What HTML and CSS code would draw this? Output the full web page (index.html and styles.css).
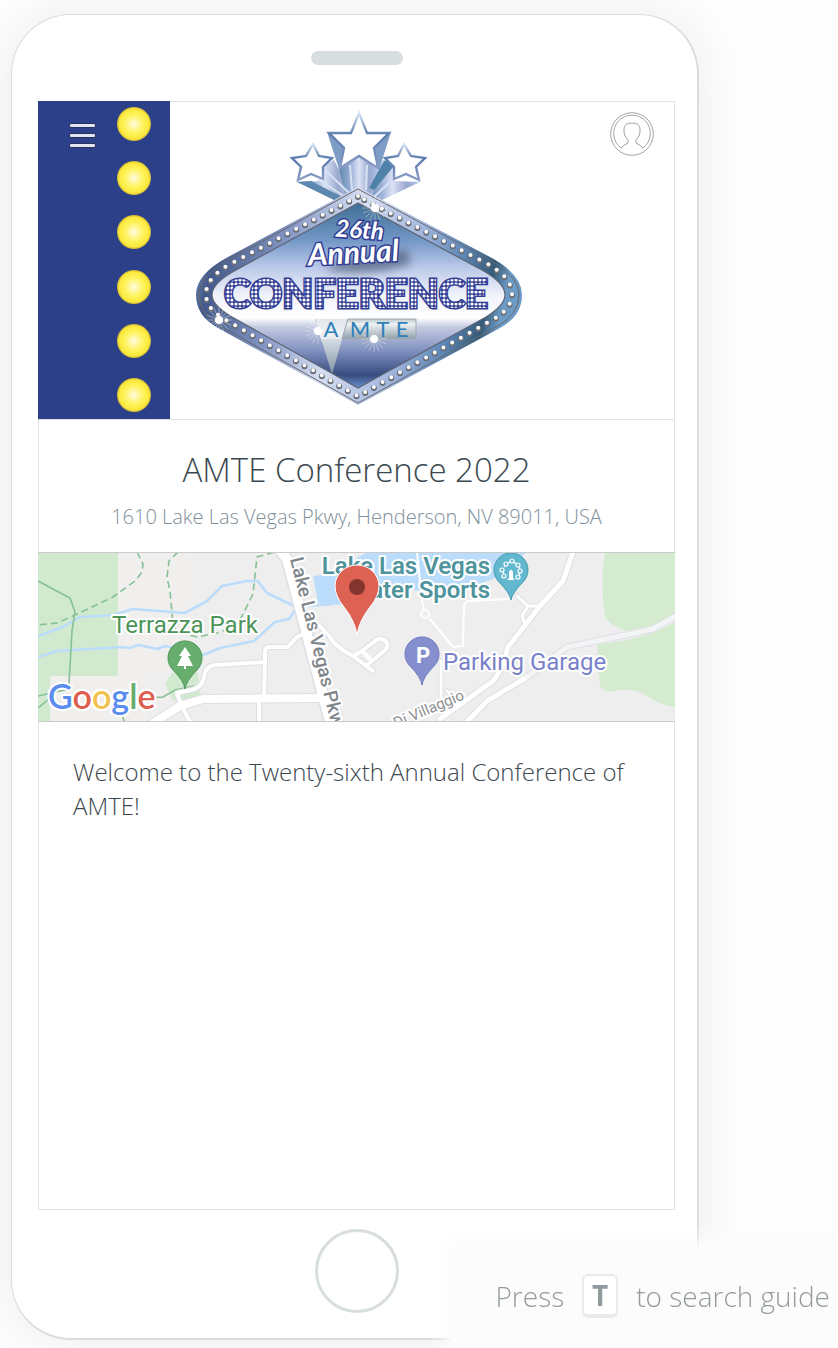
FILE: index.html
```
<!DOCTYPE html>
<html lang="en">
<head>
  <meta charset="UTF-8">
  <meta name="viewport" content="width=device-width, initial-scale=1.0">
  <title>AMTE Conference 2022</title>
  <link rel="stylesheet" href="styles.css">
</head>
<body>

  <main class="phone">
    <div class="speaker"></div>

    <div class="screen">
      <header class="banner">
        <svg class="banner-art" viewBox="38 101 637 318" xmlns="http://www.w3.org/2000/svg" role="img" aria-label="26th Annual Conference AMTE">
          <defs>
            <radialGradient id="bulb">
              <stop offset="0" stop-color="#fffce0"/>
              <stop offset="0.55" stop-color="#fff35c"/>
              <stop offset="0.88" stop-color="#fbe83c"/>
              <stop offset="1" stop-color="#c9b23a"/>
            </radialGradient>
            <linearGradient id="frame" x1="0" y1="0" x2="1" y2="0.15">
              <stop offset="0" stop-color="#8fb5df"/>
              <stop offset="0.1" stop-color="#42588a"/>
              <stop offset="0.3" stop-color="#8093c4"/>
              <stop offset="0.5" stop-color="#d5def2"/>
              <stop offset="0.7" stop-color="#a6b9e0"/>
              <stop offset="0.85" stop-color="#5b86b6"/>
              <stop offset="0.95" stop-color="#345b78"/>
              <stop offset="1" stop-color="#6c9bc8"/>
            </linearGradient>
            <linearGradient id="panel" x1="0" y1="0" x2="0" y2="1">
              <stop offset="0" stop-color="#3f6f94"/>
              <stop offset="0.2" stop-color="#7297c6"/>
              <stop offset="0.34" stop-color="#b7c6e8"/>
              <stop offset="0.5" stop-color="#f1f3fb"/>
              <stop offset="0.62" stop-color="#ffffff"/>
              <stop offset="0.67" stop-color="#c5cbe2"/>
              <stop offset="0.8" stop-color="#7f90bf"/>
              <stop offset="0.93" stop-color="#374c80"/>
              <stop offset="1" stop-color="#6a91cc"/>
            </linearGradient>
            <linearGradient id="ray">
              <stop offset="0" stop-color="#5c86ac"/>
              <stop offset="0.3" stop-color="#9db1d7"/>
              <stop offset="0.5" stop-color="#dae2f4"/>
              <stop offset="0.75" stop-color="#9aa8cf"/>
              <stop offset="1" stop-color="#b3c8e8"/>
            </linearGradient>
            <linearGradient id="starEdge" x1="0" y1="0" x2="0" y2="1">
              <stop offset="0" stop-color="#dbe7f8"/>
              <stop offset="0.4" stop-color="#5a7bad"/>
              <stop offset="1" stop-color="#8b9bc6"/>
            </linearGradient>
            <linearGradient id="plate" x1="0" y1="0" x2="0" y2="1">
              <stop offset="0" stop-color="#bac7cb"/>
              <stop offset="0.25" stop-color="#eef2f4"/>
              <stop offset="1" stop-color="#8d9fa9"/>
            </linearGradient>
            <pattern id="marquee" x="222" y="278" width="4" height="4" patternUnits="userSpaceOnUse">
              <rect width="4" height="4" fill="#313c93"/>
              <circle cx="2" cy="2" r="1.6" fill="#fff"/>
            </pattern>
            <filter id="soft" x="-30%" y="-30%" width="160%" height="160%">
              <feGaussianBlur stdDeviation="4"/>
            </filter>
            <g id="sparkle" stroke="#fff" stroke-width="0.6" stroke-opacity="0.6">
              <path d="M-13 0H13M0 -13V13M-9 -9L9 9M-9 9L9 -9M-12 -5L12 5M-12 5L12 -5M-5 -12L5 12M5 -12L-5 12"/>
              <circle r="4" fill="#fff" stroke="none"/>
            </g>
          </defs>

          <rect x="38" y="101" width="132" height="319" fill="#2b4088"/>
          <g fill="url(#bulb)">
            <circle cx="134" cy="124" r="17"/>
            <circle cx="134" cy="178" r="17"/>
            <circle cx="134" cy="232" r="17"/>
            <circle cx="134" cy="287" r="17"/>
            <circle cx="134" cy="341" r="17"/>
            <circle cx="134" cy="395" r="17"/>
          </g>

          <!-- Star trails -->
          <g fill="url(#ray)">
            <path d="M297 182L323 181L323 166L334 160L352 196L338 200Z"/>
            <path d="M420 182L394 181L394 166L383 160L365 196L380 201Z"/>
            <path d="M339 169L359 154L379 170L372 198H346Z"/>
          </g>
          <path d="M327 132L345 147L339 169ZM391 132L373 147L379 170Z" fill="#7d9dc6"/>
          <path d="M297 182L311 181L346 199L336 201Z" fill="#5c88b0"/>
          <path d="M394 166L374 190L369 188L379 170L385 160Z" fill="#4f82a8"/>
          <path d="M323 168L350 194M318 179L345 197M394 178L374 197M350 165L352 190M367 165L366 190" stroke="#d7e2f5" stroke-width="2" fill="none"/>

          <!-- Stars -->
          <g fill="#fff" stroke="url(#starEdge)" stroke-width="2.4">
            <path d="M359 113L367 133L389 133L374 148L378 168L359 156L340 168L344 148L329 133L351 133Z"/>
            <path d="M313 144L319 156L332 158L323 167L323 179L311 174L298 180L301 167L292 158L306 156Z"/>
            <path d="M404 144L398 156L385 158L394 167L394 179L406 174L419 180L416 167L425 158L411 156Z"/>
          </g>

          <!-- Sign -->
          <path d="M358 187L228 257Q196 274 196 295Q196 316 218 328L358 405L500 328Q522 316 522 295Q522 274 490 257Z" fill="url(#frame)"/>
          <path d="M358 189L230 259Q199 276 199 295Q199 314 220 326L358 403L498 326Q519 314 519 295Q519 276 488 259Z" fill="none" stroke="#6a6868" stroke-width="1"/>
          <path d="M358 203L236 270Q212 283 212 295Q212 305 232 317L358 388L486 317Q505 305 505 295Q505 283 482 270Z" fill="url(#panel)" stroke="#5d6370" stroke-width="1.2"/>
          <path d="M358 197L232 264Q206 278 206 295Q206 310 226 321L358 397L492 321Q512 310 512 295Q512 278 486 264Z" fill="none" stroke="#6b6e76" stroke-width="6" stroke-linecap="round" stroke-dasharray="0 10"/>
          <path d="M358 196L232 263Q206 277 206 294Q206 309 226 320L358 396L492 320Q512 309 512 294Q512 277 486 263Z" fill="none" stroke="#fff" stroke-width="4" stroke-linecap="round" stroke-dasharray="0 10"/>

          <path d="M328 266Q370 250 408 250L410 264Q370 278 326 270Z" fill="#3f4d68" opacity="0.6" filter="url(#soft)"/>
          <g class="sign-script">
            <text x="335" y="238" transform="rotate(4 357 235)">26th</text>
            <text class="script-big" x="308" y="263" transform="rotate(-3 357 255)">Annual</text>
          </g>

          <text class="sign-name" x="356" y="308" text-anchor="middle">CONFERENCE</text>

          <path d="M315 319H348L332 374Z" fill="url(#plate)" opacity="0.85"/>
          <path d="M348 319H416V339H342Z" fill="url(#plate)" stroke="#a1aab2"/>
          <path d="M316 319H347L341 339H321Z" fill="#eef1f5" opacity="0.7"/>
          <use href="#sparkle" x="219" y="320"/>
          <use href="#sparkle" x="318" y="331"/>
          <use href="#sparkle" x="374" y="339"/>
          <use href="#sparkle" x="375" y="208"/>
          <g class="sign-amte" text-anchor="middle">
            <text x="331" y="337">A</text>
            <text x="360" y="337">M</text>
            <text x="383" y="337">T</text>
            <text x="402" y="337">E</text>
          </g>
        </svg>

        <button class="menu-button" type="button" aria-label="Menu">
          <span></span><span></span><span></span>
        </button>
        <button class="profile-button" type="button" aria-label="Profile">
          <svg viewBox="0 0 44 44" fill="none" stroke="#a3a3a3" stroke-width="1">
            <circle cx="22" cy="22" r="21.3"/>
            <path d="M11 36A18.3 18.3 0 1 1 33 36Q30 33 26 31V28Q30 24 30 20V17Q30 11 22 11T14 17V20Q14 24 18 28V31Q14 33 11 36Z"/>
          </svg>
        </button>
      </header>

      <section class="intro">
        <h1>AMTE Conference 2022</h1>
        <p>1610 Lake Las Vegas Pkwy, Henderson, NV 89011, USA</p>
      </section>

      <a class="map" href="#map" aria-label="Open map">
        <svg viewBox="38 554 637 168" xmlns="http://www.w3.org/2000/svg">
          <rect x="38" y="553" width="638" height="170" fill="#eeeeee"/>
          <path d="M38 553H194V650L165 677H150V723H38Z" fill="#f1efed"/>
          <path d="M38 553H118V677H50V723H38Z" fill="#d1e9cf"/>
          <path d="M165 684L172 674H198L200 698L173 702Z" fill="#d1e9cf"/>
          <path d="M605 553Q600 580 605 618Q612 628 627 632Q660 627 676 614V553Z" fill="#d4ebd0"/>
          <path d="M597 645L600 688Q606 694 614 692Q633 688 646 696Q660 707 676 708V622Q650 640 597 645Z" fill="#d4ebd0"/>
          <path d="M313 577L340 574Q354 557 370 553H527L497 577Q486 588 420 592L375 585L355 604L332 606L318 604Z" fill="#bbddfb"/>

          <!-- Streams -->
          <g fill="none" stroke="#bbddfb" stroke-width="2.6" stroke-linejoin="round">
            <path d="M38 637L63 628L80 618L113 616L133 610L185 614L207 602L222 587L247 582L258 582L267 594L296 608L332 605"/>
            <path d="M38 658L57 652L122 648L130 649L138 646L158 650L165 647L203 656L220 649L254 642L275 623L289 620L296 610"/>
          </g>

          <!-- Trails -->
          <g fill="none" stroke="#86c195" stroke-width="1.6">
            <path d="M38 582L70 599L75 613L72 632L69 685M38 697L69 690M38 709L55 695M150 699L163 698L175 691L194 687M118 696H150M122 712L124 723"/>
            <path stroke-dasharray="7 4" d="M137 553L143 565L142 573L135 582L113 598L75 616L57 624L38 626"/>
            <path stroke-dasharray="7 4" d="M178 553L169 562L167 578L170 592L173 625L177 633L197 638L217 634L237 627L253 595L257 558L275 553"/>
          </g>

          <!-- Roads: grey casing with white on top -->
          <g fill="none" stroke-linejoin="round" stroke-linecap="round">
            <g stroke="#dedfe4">
              <path stroke-width="13" d="M275 545L287 560L332 730"/>
              <path stroke-width="10" d="M150 726L180 707L203 700L323 699"/>
              <path stroke-width="6" d="M182 708L177 694L195 690Q203 687 205 674Q207 667 215 666L265 663V653Q265 648 270 648H288L297 638L320 627L330 638Q335 648 353 657L362 652L375 642Q379 638 384 641Q391 646 384 652L366 667M353 657L373 672M265 663L264 698M259 702V726M182 708L192 726"/>
              <path stroke-width="7" d="M573 553L563 582L540 607L508 648Q503 670 493 682L440 720M676 617L653 630L597 642L567 648L527 678L487 702L464 726"/>
              <path stroke-width="5" d="M517 597L528 607L540 607M528 607L522 617L525 625M441 662V707M447 692L455 700"/>
            </g>
            <g stroke="#fff">
              <path stroke-width="10" d="M275 545L287 560L332 730"/>
              <path stroke-width="8" d="M150 726L180 707L203 700L323 699"/>
              <path stroke-width="4" d="M182 708L177 694L195 690Q203 687 205 674Q207 667 215 666L265 663V653Q265 648 270 648H288L297 638L320 627L330 638Q335 648 353 657L362 652L375 642Q379 638 384 641Q391 646 384 652L366 667M353 657L373 672M362 652L370 660M265 663L264 698M259 702V726M182 708L192 726"/>
              <path stroke-width="5" d="M573 553L563 582L540 607L508 648Q503 670 493 682L440 720M527 678L487 702L464 726"/>
              <path stroke="#f3f4f6" stroke-width="5" d="M676 617L653 630L597 642L567 648L527 678"/>
              <path stroke-width="3" d="M517 597L528 607L540 607M528 607L522 617L525 625M441 662V707M447 692L455 700"/>
              <path stroke-width="2" d="M417 553L422 602L424 610M430 620L453 648L463 647L464 605L468 602L512 600"/>
              <circle cx="425" cy="615" r="4" stroke-width="2"/>
            </g>
          </g>

          <g class="map-labels">
            <text class="label-road" transform="translate(290 560) rotate(76)">Lake Las Vegas Pkwy</text>
            <text class="label-street" transform="translate(373 739) rotate(-23)">Via Di Villaggio</text>
            <text class="label-park" x="112" y="634">Terrazza Park</text>
            <text class="label-parking" x="443" y="671">Parking Garage</text>
            <text class="label-water" x="490" y="575" text-anchor="end">Lake Las Vegas</text>
            <text class="label-water" x="490" y="599" text-anchor="end">Water Sports</text>
            <text class="label-google" x="48" y="710"><tspan fill="#5b8def">G</tspan><tspan fill="#dd5f50">o</tspan><tspan fill="#f2c24f">o</tspan><tspan fill="#5b8def">g</tspan><tspan fill="#67ad6c">l</tspan><tspan fill="#dd5f50">e</tspan></text>
          </g>

          <!-- Pins -->
          <path d="M185 690Q184 682 173 671A17 17 0 1 1 197 671Q186 682 185 690Z" fill="#67ae6e" stroke="#4b9556"/>
          <path d="M185 648L191 657H188L193 667H186V670H184V667H177L182 657H179Z" fill="#fff"/>
          <path d="M422 686Q421 678 410 667A17 17 0 1 1 434 667Q423 678 422 686Z" fill="#868fce" stroke="#6e78bd"/>
          <text class="pin-letter" x="423" y="664" text-anchor="middle">P</text>
          <path d="M511 601Q510 594 499 583A17 17 0 1 1 523 583Q512 594 511 601Z" fill="#62b8ce" stroke="#459bad"/>
          <path d="M507 581L509 579V574Q509 571 511 571T513 574V579L515 581Z" fill="#fff"/>
          <g fill="none" stroke="#fff" stroke-width="1.2">
            <path d="M504 575L503 573M504 568L505 567M508 564L510 563M514 563L516 565M519 568L520 570M520 574L519 576"/>
            <circle cx="504" cy="577" r="2"/>
            <circle cx="502" cy="571" r="2"/>
            <circle cx="506" cy="565" r="2"/>
            <circle cx="512" cy="562" r="2"/>
            <circle cx="518" cy="566" r="2"/>
            <circle cx="520" cy="572" r="2"/>
            <circle cx="518" cy="578" r="2"/>
          </g>
          <path d="M357 636Q355 622 344 608Q335 597 335 587A22 21 0 0 1 379 587Q379 597 370 608Q359 622 357 636Z" fill="#de6253" stroke="#fff"/>
          <circle cx="357" cy="588" r="8" fill="#83342e"/>
        </svg>
      </a>

      <p class="welcome">Welcome to the Twenty-sixth Annual Conference of AMTE!</p>
    </div>

    <button class="home-button" type="button" aria-label="Home"></button>
  </main>

  <aside class="search-hint">
    <span>Press</span>
    <kbd>T</kbd>
    <span>to search guide</span>
  </aside>

</body>
</html>
```
FILE: styles.css
```
* {
  box-sizing: border-box;
}
body {
  margin: 0;
  min-height: 100vh;
  padding: 14px 139px 8px 11px;
  display: flex;
  background-color: #fdfdfd;
  color: #3c4850;
  font-family: "Open Sans", "Noto Sans", sans-serif;
}
button {
  padding: 0;
  border: 0;
  background: none;
  cursor: pointer;
}
.phone {
  flex: 1;
  min-width: 0;
  display: flex;
  flex-direction: column;
  align-items: center;
  padding: 36px 22px 25px 26px;
  background-color: #fff;
  border: 2px solid #d7dde0;
  border-width: 1px 2px 2px 1px;
  border-radius: 60px;
  box-shadow: 0 0 50px rgba(0, 0, 0, 0.07);
}
.speaker {
  width: 92px;
  height: 14px;
  border-radius: 7px;
  background-color: #d8dee0;
}
.screen {
  flex: 1;
  width: 100%;
  margin: 36px 0 19px;
  background-color: #fff;
  border: 1px solid #e0e3e4;
}

/* Banner and map cover the side borders of the screen */
.banner,
.map {
  margin: 0 -1px;
}
.banner {
  position: relative;
  margin-top: -1px;
  border-bottom: 1px solid #e0e3e4;
}
.banner::after {
  content: "";
  position: absolute;
  inset: 0 0 0 132px;
  border-top: 1px solid #e0e3e4;
  border-right: 1px solid #e0e3e4;
  pointer-events: none;
}
.banner-art {
  display: block;
  width: 100%;
  height: auto;
}
.menu-button {
  position: absolute;
  top: 22px;
  left: 31px;
  width: 27px;
  height: 25px;
  display: flex;
  flex-direction: column;
  justify-content: space-between;
}
.menu-button span {
  width: 27px;
  height: 5px;
  border: 1px solid #26325f;
  border-radius: 2px;
  background-color: #e3e6f2;
}
.profile-button {
  position: absolute;
  top: 11px;
  right: 21px;
  width: 44px;
  height: 44px;
}
.profile-button svg {
  display: block;
}
.sign-script text {
  font: italic 700 24px Lato, sans-serif;
  fill: #fff;
  stroke: #313c93;
  stroke-width: 3px;
  paint-order: stroke;
}
.sign-script .script-big {
  font-size: 30px;
}
.sign-name {
  font: 900 40px Lato, sans-serif;
  fill: url(#marquee);
  stroke: #313c93;
  stroke-width: 3px;
  paint-order: stroke;
}
.sign-amte text {
  font: 22px Lato, sans-serif;
  fill: #2f7fb8;
}

/* Title and address */
.intro {
  padding: 26px 16px 20px;
  text-align: center;
}
.intro h1 {
  margin: 0;
  font-size: 33px;
  line-height: 48px;
  font-weight: 300;
}
.intro p {
  margin: 8px 0 0;
  font-size: 20px;
  line-height: 30px;
  font-weight: 300;
  color: #80909a;
}

/* Map */
.map {
  display: block;
  border-top: 1px solid #c9cbcb;
  border-bottom: 1px solid #c9cbcb;
}
.map svg {
  display: block;
  width: 100%;
  height: auto;
}
.map-labels text {
  font-family: Roboto, sans-serif;
  font-size: 24px;
  stroke: #fff;
  stroke-width: 4px;
  stroke-linejoin: round;
  paint-order: stroke;
}
.map-labels .label-park {
  fill: #4c9458;
}
.map-labels .label-parking {
  fill: #7881c9;
}
.map-labels .label-water {
  font-weight: 600;
  fill: #4f949d;
}
.map-labels .label-road {
  font-size: 19px;
  font-weight: 500;
  fill: #7f868b;
}
.map-labels .label-street {
  font-size: 15px;
  fill: #8b8e91;
}
.map-labels .label-google {
  font-family: Lato, sans-serif;
  font-size: 34px;
  font-weight: 600;
}
.map .pin-letter {
  font: 700 22px Roboto, sans-serif;
  fill: #fff;
}

.welcome {
  margin: 0;
  padding: 33px 34px;
  font-size: 24px;
  line-height: 34px;
  font-weight: 300;
}
.home-button {
  width: 84px;
  height: 84px;
  border: 3px solid #d8dee0;
  border-radius: 50%;
}

/* Keyboard hint */
.search-hint {
  position: fixed;
  right: 0;
  bottom: 0;
  display: flex;
  align-items: center;
  gap: 18px;
  padding: 28px 8px 30px 44px;
  background-color: #fcfcfc;
  box-shadow: 0 0 16px 8px #fcfcfc;
  color: #949b9f;
  font-size: 28px;
  line-height: 44px;
  font-weight: 300;
}
.search-hint kbd {
  width: 36px;
  height: 44px;
  border: 2px solid #e8eaeb;
  border-bottom-width: 4px;
  border-radius: 6px;
  background-color: #fff;
  font-family: inherit;
  font-size: 28px;
  line-height: 38px;
  font-weight: 700;
  text-align: center;
}
```
